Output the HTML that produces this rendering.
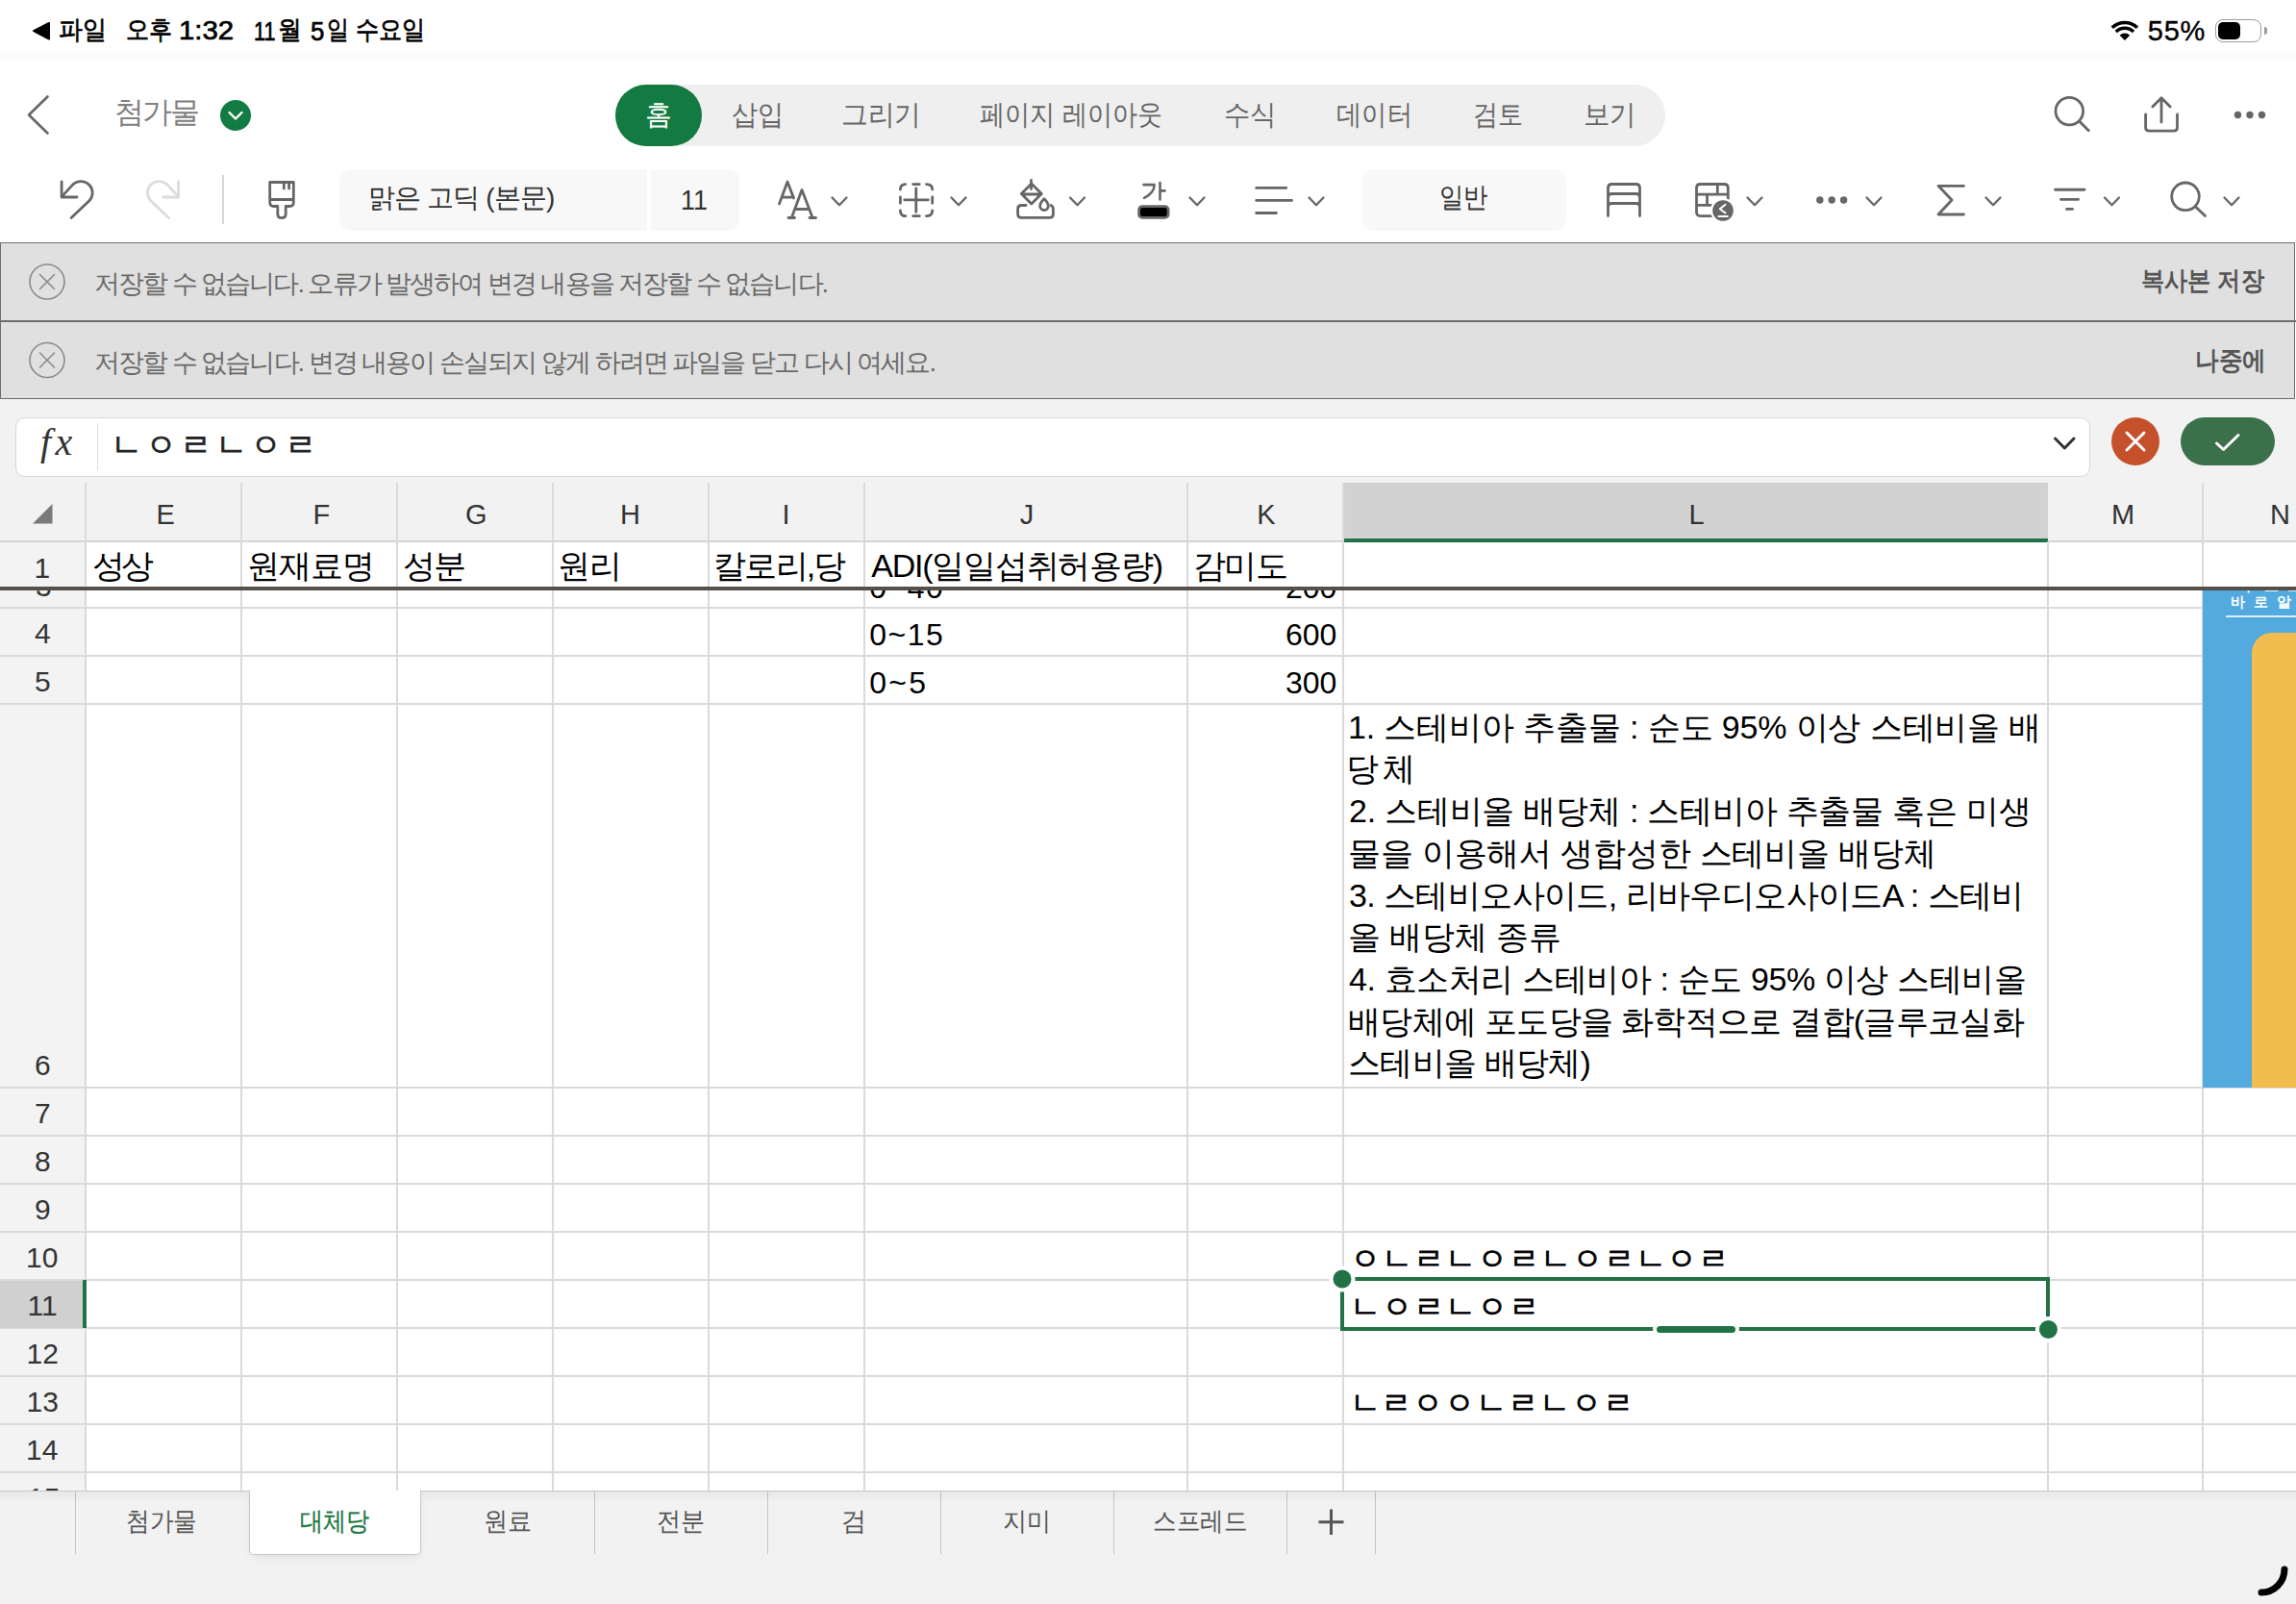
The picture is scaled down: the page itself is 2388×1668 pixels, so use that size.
<!DOCTYPE html>
<html><head><meta charset="utf-8">
<style>
html,body{margin:0;padding:0;}
body{width:2388px;height:1668px;position:relative;overflow:hidden;background:#fff;font-family:"Liberation Sans",sans-serif;color:#000;}
.a{position:absolute;}
.t{position:absolute;white-space:pre;line-height:1;}
svg.s{position:absolute;overflow:visible;pointer-events:none;}
.ic path,.ic circle,.ic rect{fill:none;stroke:#666;stroke-width:2.8;stroke-linecap:round;stroke-linejoin:round;}
</style></head><body>

<div class="a" style="left:0;top:53px;width:2388px;height:10px;background:#fcfcfc"></div>
<svg class="s" width="2388" height="1668" style="left:0;top:0"><path d="M35 32.2 L51 24 L51 40.5 Z" fill="#000" stroke="#000" stroke-width="2" stroke-linejoin="round"/></svg>
<div class="t" id="sb_pa" style="left:61.00px;top:18.19px;font-size:26.5px;color:#000;font-weight:normal;letter-spacing:0.000px;-webkit-text-stroke:0.7px #000;transform:scaleX(0.9244);transform-origin:0 0;">파일</div>
<div class="t" id="sb_oh" style="left:131.00px;top:18.19px;font-size:26.5px;color:#000;font-weight:normal;letter-spacing:0.000px;-webkit-text-stroke:0.7px #000;transform:scaleX(0.8906);transform-origin:0 0;">오후</div>
<div class="t" id="sb_t" style="left:185.60px;top:18.25px;font-size:27.5px;color:#000;font-weight:normal;letter-spacing:0.000px;-webkit-text-stroke:0.7px #000;transform:scaleX(1.0676);transform-origin:0 0;">1:32</div>
<div class="t" id="sb_11" style="left:264.20px;top:18.55px;font-size:27.5px;color:#000;font-weight:normal;letter-spacing:0.000px;-webkit-text-stroke:0.7px #000;transform:scaleX(0.7889);transform-origin:0 0;">11</div>
<div class="t" id="sb_wol" style="left:289.40px;top:18.19px;font-size:26.5px;color:#000;font-weight:normal;letter-spacing:0.000px;-webkit-text-stroke:0.7px #000;transform:scaleX(0.9172);transform-origin:0 0;">월</div>
<div class="t" id="sb_5" style="left:323.20px;top:18.55px;font-size:27.5px;color:#000;font-weight:normal;letter-spacing:0.000px;-webkit-text-stroke:0.7px #000;transform:scaleX(0.9388);transform-origin:0 0;">5</div>
<div class="t" id="sb_il" style="left:340.00px;top:18.19px;font-size:26.5px;color:#000;font-weight:normal;letter-spacing:0.000px;-webkit-text-stroke:0.7px #000;transform:scaleX(0.8490);transform-origin:0 0;">일</div>
<div class="t" id="sb_dow" style="left:370.00px;top:17.69px;font-size:26.5px;color:#000;font-weight:normal;letter-spacing:0.000px;-webkit-text-stroke:0.7px #000;transform:scaleX(0.8954);transform-origin:0 0;">수요일</div>
<svg class="s" width="2388" height="1668" style="left:0;top:0"><g fill="#000"><path d="M2209.9 42 L2204.6 36.8 A7.5 7.5 0 0 1 2215.2 36.8 Z"/><path d="M2200.8 33 A13 13 0 0 1 2219 33" fill="none" stroke="#000" stroke-width="3.6"/><path d="M2196.8 28.8 A18.8 18.8 0 0 1 2223 28.8" fill="none" stroke="#000" stroke-width="3.6"/></g></svg>
<div class="t" id="sb_pct" style="left:2233.80px;top:17.74px;font-size:29px;color:#000;font-weight:normal;letter-spacing:0.750px;-webkit-text-stroke:0.4px #000;">55%</div>
<div class="a" style="left:2303.5px;top:19.5px;width:46px;height:22px;border:1.6px solid #9a9a9a;border-radius:8px"></div>
<div class="a" style="left:2307px;top:23px;width:23px;height:18px;background:#000;border-radius:5px"></div>
<div class="a" style="left:2355px;top:28px;width:3px;height:8px;background:#999;border-radius:0 4px 4px 0"></div>
<svg class="s" width="2388" height="1668" style="left:0;top:0"><g class="ic"><path d="M49.5 100.5 L30 119.5 L49.5 138.5" style="stroke:#666;stroke-width:2.6"/></g></svg>
<div class="t" id="title" style="left:119.00px;top:101.26px;font-size:31px;color:#808080;font-weight:normal;letter-spacing:-2.000px;">첨가물</div>
<div class="a" style="left:229px;top:104px;width:32px;height:32px;border-radius:50%;background:#137c43"></div>
<svg class="s" width="2388" height="1668" style="left:0;top:0"><path d="M238.5 117 L245 123.5 L251.5 117" fill="none" stroke="#fff" stroke-width="2.4" stroke-linecap="round" stroke-linejoin="round"/></svg>
<div class="a" style="left:640px;top:88px;width:1092px;height:64px;background:#efefef;border-radius:32px"></div>
<div class="a" style="left:640px;top:88px;width:90px;height:64px;background:#137a41;border-radius:32px"></div>
<div class="t" id="tab0" style="left:671.00px;top:104.84px;font-size:29px;color:#fff;font-weight:normal;letter-spacing:0.000px;transform:scaleX(0.9600);transform-origin:0 0;">홈</div>
<div class="t" id="tab1" style="left:761.00px;top:104.84px;font-size:29px;color:#666;font-weight:normal;letter-spacing:0.000px;transform:scaleX(0.9366);transform-origin:0 0;">삽입</div>
<div class="t" id="tab2" style="left:875.00px;top:105.34px;font-size:29px;color:#666;font-weight:normal;letter-spacing:0.000px;transform:scaleX(0.9568);transform-origin:0 0;">그리기</div>
<div class="t" id="tab3" style="left:1019.00px;top:105.34px;font-size:29px;color:#666;font-weight:normal;letter-spacing:0.000px;transform:scaleX(0.9014);transform-origin:0 0;">페이지 레이아웃</div>
<div class="t" id="tab4" style="left:1273.00px;top:104.84px;font-size:29px;color:#666;font-weight:normal;letter-spacing:0.000px;transform:scaleX(0.9450);transform-origin:0 0;">수식</div>
<div class="t" id="tab5" style="left:1390.00px;top:105.34px;font-size:29px;color:#666;font-weight:normal;letter-spacing:0.000px;transform:scaleX(0.9085);transform-origin:0 0;">데이터</div>
<div class="t" id="tab6" style="left:1532.00px;top:104.84px;font-size:29px;color:#666;font-weight:normal;letter-spacing:0.000px;transform:scaleX(0.8988);transform-origin:0 0;">검토</div>
<div class="t" id="tab7" style="left:1647.00px;top:105.34px;font-size:29px;color:#666;font-weight:normal;letter-spacing:0.000px;transform:scaleX(0.9450);transform-origin:0 0;">보기</div>
<svg class="s" width="2388" height="1668" style="left:0;top:0"><g class="ic" style="stroke-width:2.8"><circle cx="2152.3" cy="115.6" r="14.3"/><path d="M2162.6 126 L2172.3 135.8"/><path d="M2248 102 V127 M2238.8 111 L2248 101.8 L2257.2 111 M2231.6 119 V132.5 Q2231.6 136.2 2235.3 136.2 H2260.8 Q2264.5 136.2 2264.5 132.5 V119"/></g></svg>
<svg class="s" width="2388" height="1668" style="left:0;top:0"><g fill="#666"><circle cx="2327.5" cy="119.5" r="3.7"/><circle cx="2340" cy="119.5" r="3.7"/><circle cx="2352.5" cy="119.5" r="3.7"/></g></svg>
<svg class="s" width="2388" height="1668" style="left:0;top:0"><g class="ic"><path d="M64.1 189 V205 H80"/><path d="M64.6 204.1 L75.6 192.1 A12 12 0 0 1 92.6 192.1 A12 12 0 0 1 92.6 209.1 L74.1 226.5"/><path style="stroke:#dcdcdc" d="M185.5 189 V205 H169.6"/><path style="stroke:#dcdcdc" d="M185 204.1 L174 192.1 A12 12 0 0 0 157 192.1 A12 12 0 0 0 157 209.1 L175.5 226.5"/><path d="M280.7 189.5 H305.3 V210.5 Q305.3 214.5 301.3 214.5 H297.2 V222.5 Q297.2 226.7 293 226.7 Q288.8 226.7 288.8 222.5 V214.5 H284.7 Q280.7 214.5 280.7 210.5 Z M280.7 207.5 H305.3 M295.3 190 V196 M300.6 190 V196"/></g></svg>
<div class="a" style="left:231px;top:182px;width:2px;height:51px;background:#d6d6d6"></div>
<div class="a" style="left:353px;top:176px;width:319.5px;height:63.5px;background:#f8f8f8;border-radius:12px 0 0 12px"></div>
<div class="a" style="left:677px;top:176px;width:92px;height:63.5px;background:#f8f8f8;border-radius:0 12px 12px 0"></div>
<div class="t" id="fontname" style="left:383.00px;top:192.38px;font-size:28px;color:#333;font-weight:normal;letter-spacing:-0.889px;">맑은 고딕 (본문)</div>
<div class="t" id="fontsize" style="left:708.00px;top:193.30px;font-size:30px;color:#333;font-weight:normal;letter-spacing:0.000px;transform:scaleX(0.8929);transform-origin:0 0;">11</div>
<div class="a" style="left:1417px;top:176px;width:212px;height:63.5px;background:#f8f8f8;border-radius:12px"></div>
<div class="t" id="numfmt" style="left:1497.00px;top:191.34px;font-size:29px;color:#333;font-weight:normal;letter-spacing:0.000px;transform:scaleX(0.8774);transform-origin:0 0;">일반</div>
<svg class="s" width="2388" height="1668" style="left:0;top:0"><g class="ic"><path d="M810.5 212 L819 189 L825.5 206 M814 205.2 H823"/><path d="M823.5 226 L834 197.5 L845 226 M828 217.5 H840.5 M820 226.5 H826.5 M842 226.5 H848.5"/><path d="M865.5 205.5 L873 213.2 L880.5 205.5" style="stroke-width:2.3"/><path d="M936.4 197 Q936.4 191.6 941.8 191.6 M963.5 191.6 Q969.7 191.6 969.7 197 M969.7 219 Q969.7 224.7 963.5 224.7 M941.8 224.7 Q936.4 224.7 936.4 219 M949.7 191.6 H956.3 M949.7 224.7 H956.3 M936.4 205 V211.3 M969.7 205 V211.3 M952.8 196 V220.4 M940.7 207.8 H965.4"/><path d="M989.5 205.5 L997 213.2 L1004.5 205.5" style="stroke-width:2.3"/><path d="M1072.8 191 L1083.3 201.5 L1072.8 212 L1062.3 201.5 Z M1062.8 202 H1082.5 M1072.5 187.5 V196.5"/><path d="M1067 213.5 H1062.5 Q1058.6 213.5 1058.6 217.5 V222.4 Q1058.6 226.3 1062.5 226.3 H1091.5 Q1095.4 226.3 1095.4 222.4 V217.5 Q1095.4 214.6 1093 213.5"/><path d="M1086 206.8 Q1090.3 211 1090.3 214.2 A4.3 4.3 0 0 1 1081.7 214.2 Q1081.7 211 1086 206.8 Z"/><path d="M1113.0 205.5 L1120.5 213.2 L1128.0 205.5" style="stroke-width:2.3"/><path d="M1189.5 192.1 H1200.5 Q1201 200 1190 205.9 M1206.5 190 V207.5 M1206.5 198.4 H1211.5" style="stroke-width:2.6"/><rect x="1184.6" y="214.7" width="30.5" height="11.7" rx="3.5" style="fill:#000;stroke:#666;stroke-width:2.8"/><path d="M1237.5 205.5 L1245 213.2 L1252.5 205.5" style="stroke-width:2.3"/><path d="M1306.7 195.4 H1337.6 M1306.7 208.4 H1343.5 M1306.7 221.5 H1327.4" style="stroke-width:2.9"/><path d="M1361.5 205.5 L1369 213.2 L1376.5 205.5" style="stroke-width:2.3"/><path d="M1672.5 224.5 V195.5 Q1672.5 191.5 1676.5 191.5 H1701.5 Q1705.5 191.5 1705.5 195.5 V224.5 M1672.5 205.5 Q1672.5 201.5 1676.5 201.5 H1701.5 Q1705.5 201.5 1705.5 205.5 M1672.5 215.5 Q1672.5 211.5 1676.5 211.5 H1701.5 Q1705.5 211.5 1705.5 215.5"/><path d="M1781 224.6 H1768.5 Q1764.5 224.6 1764.5 220.6 V195.5 Q1764.5 191.5 1768.5 191.5 H1793.3 Q1797.3 191.5 1797.3 195.5 V207 M1764.5 202.2 H1797.3 M1764.5 213.4 H1780 M1786.3 191.5 V202.2 M1775.5 202.2 V213.4"/><circle cx="1792" cy="219" r="13" style="fill:#fff;stroke:none"/><circle cx="1792" cy="219" r="10.8" style="fill:#666;stroke:none"/><path d="M1794.5 212.8 L1788.8 217.2 L1794.5 221.5 M1787.5 225 H1796.8" style="stroke:#fff;stroke-width:2"/><path d="M1817.5 205.5 L1825 213.2 L1832.5 205.5" style="stroke-width:2.3"/><path d="M1941.5 205.5 L1949 213.2 L1956.5 205.5" style="stroke-width:2.3"/><path d="M2042.5 193.3 H2016 L2030 208 L2016 223 H2042.5"/><path d="M2065.5 205.5 L2073 213.2 L2080.5 205.5" style="stroke-width:2.3"/><path d="M2137.5 197.2 H2168 M2143.5 207.4 H2161.5 M2149.5 217.4 H2155.5" style="stroke-width:2.9"/><path d="M2189.0 205.5 L2196.5 213.2 L2204.0 205.5" style="stroke-width:2.3"/><circle cx="2273" cy="204.3" r="14.3"/><path d="M2283.3 214.8 L2293.5 224.6"/><path d="M2313.5 205.5 L2321 213.2 L2328.5 205.5" style="stroke-width:2.3"/></g></svg>
<svg class="s" width="2388" height="1668" style="left:0;top:0"><g fill="#666"><circle cx="1892.8" cy="208" r="3.7"/><circle cx="1905.2" cy="208" r="3.7"/><circle cx="1917.6" cy="208" r="3.7"/></g></svg>
<div class="a" style="left:0;top:252px;width:2385px;height:161px;background:#e0e0e0;border:1.5px solid #6e6e6e"></div>
<div class="a" style="left:0;top:333px;width:2388px;height:2px;background:#6e6e6e"></div>
<svg class="s" width="2388" height="1668" style="left:0;top:0"><g fill="none" stroke="#8a8a8a" stroke-width="1.6"><circle cx="49" cy="293" r="18"/><path d="M41.5 285.5 L56.5 300.5 M56.5 285.5 L41.5 300.5" stroke-linecap="round"/></g></svg>
<svg class="s" width="2388" height="1668" style="left:0;top:0"><g fill="none" stroke="#8a8a8a" stroke-width="1.6"><circle cx="49" cy="374.5" r="18"/><path d="M41.5 367.0 L56.5 382.0 M56.5 367.0 L41.5 382.0" stroke-linecap="round"/></g></svg>
<div class="t" id="ban1" style="left:98.00px;top:282.42px;font-size:27px;color:#6a6a6a;font-weight:normal;letter-spacing:-1.959px;">저장할 수 없습니다. 오류가 발생하여 변경 내용을 저장할 수 없습니다.</div>
<div class="t" id="ban2" style="left:98.00px;top:363.92px;font-size:27px;color:#6a6a6a;font-weight:normal;letter-spacing:-1.944px;">저장할 수 없습니다. 변경 내용이 손실되지 않게 하려면 파일을 닫고 다시 여세요.</div>
<div class="t" id="ban1r" style="left:2227.00px;top:278.92px;font-size:27px;color:#555;font-weight:bold;letter-spacing:0.000px;transform:scaleX(0.8972);transform-origin:0 0;">복사본 저장</div>
<div class="t" id="ban2r" style="left:2283.00px;top:361.92px;font-size:27px;color:#555;font-weight:bold;letter-spacing:0.000px;transform:scaleX(0.9145);transform-origin:0 0;">나중에</div>
<div class="a" style="left:0;top:415px;width:2388px;height:87px;background:#f2f2f2"></div>
<div class="a" style="left:16px;top:434px;width:2155.5px;height:59.5px;background:#fff;border:1px solid #d6d6d6;border-radius:10px"></div>
<div class="t" id="fx" style="left:42.00px;top:440.40px;font-size:40px;color:#333;font-weight:normal;letter-spacing:4.500px;font-family:'Liberation Serif',serif;font-style:italic">fx</div>
<div class="a" style="left:100.5px;top:440px;width:1.5px;height:49px;background:#dedede"></div>
<div class="t" id="ftext" style="left:115.00px;top:445.68px;font-size:33px;color:#222;font-weight:normal;letter-spacing:3.200px;-webkit-text-stroke:0.9px #222;">ㄴㅇㄹㄴㅇㄹ</div>
<svg class="s" width="2388" height="1668" style="left:0;top:0"><path d="M2137.5 456 L2147.3 466 L2157 456" fill="none" stroke="#333" stroke-width="3" stroke-linecap="round" stroke-linejoin="round"/></svg>
<div class="a" style="left:2196px;top:434px;width:50px;height:50px;border-radius:50%;background:#c4512b"></div>
<svg class="s" width="2388" height="1668" style="left:0;top:0"><path d="M2212 450 L2230 468 M2230 450 L2212 468" fill="none" stroke="#fff" stroke-width="3" stroke-linecap="round"/></svg>
<div class="a" style="left:2268px;top:434px;width:98px;height:50px;border-radius:25px;background:#3a714b"></div>
<svg class="s" width="2388" height="1668" style="left:0;top:0"><path d="M2305.5 461 L2312.5 467.5 L2328 452.5" fill="none" stroke="#fff" stroke-width="3" stroke-linecap="round" stroke-linejoin="round"/></svg>
<div class="a" style="left:0;top:502px;width:2388px;height:61px;background:#f2f2f2"></div>
<div class="a" style="left:0;top:563px;width:89px;height:987px;background:#f3f3f3"></div>
<div class="a" style="left:1397px;top:502px;width:733px;height:61px;background:#d2d2d2"></div>
<div class="a" style="left:0;top:562px;width:2388px;height:2px;background:#d4d4d4"></div>
<div class="a" style="left:1397px;top:560px;width:733px;height:4px;background:#217346"></div>
<div class="a" style="left:0;top:631px;width:2291px;height:2px;background:#dadada"></div>
<div class="a" style="left:2291px;top:631px;width:97px;height:2px;background:#dadada"></div>
<div class="a" style="left:0;top:681px;width:2291px;height:2px;background:#dadada"></div>
<div class="a" style="left:2291px;top:681px;width:97px;height:2px;background:#dadada"></div>
<div class="a" style="left:0;top:731px;width:2291px;height:2px;background:#dadada"></div>
<div class="a" style="left:2291px;top:731px;width:97px;height:2px;background:#dadada"></div>
<div class="a" style="left:0;top:1130px;width:2291px;height:2px;background:#dadada"></div>
<div class="a" style="left:2291px;top:1130px;width:97px;height:2px;background:#dadada"></div>
<div class="a" style="left:0;top:1180px;width:2291px;height:2px;background:#dadada"></div>
<div class="a" style="left:2291px;top:1180px;width:97px;height:2px;background:#dadada"></div>
<div class="a" style="left:0;top:1230px;width:2291px;height:2px;background:#dadada"></div>
<div class="a" style="left:2291px;top:1230px;width:97px;height:2px;background:#dadada"></div>
<div class="a" style="left:0;top:1280px;width:2291px;height:2px;background:#dadada"></div>
<div class="a" style="left:2291px;top:1280px;width:97px;height:2px;background:#dadada"></div>
<div class="a" style="left:0;top:1330px;width:2291px;height:2px;background:#dadada"></div>
<div class="a" style="left:2291px;top:1330px;width:97px;height:2px;background:#dadada"></div>
<div class="a" style="left:0;top:1380px;width:2291px;height:2px;background:#dadada"></div>
<div class="a" style="left:2291px;top:1380px;width:97px;height:2px;background:#dadada"></div>
<div class="a" style="left:0;top:1430px;width:2291px;height:2px;background:#dadada"></div>
<div class="a" style="left:2291px;top:1430px;width:97px;height:2px;background:#dadada"></div>
<div class="a" style="left:0;top:1480px;width:2291px;height:2px;background:#dadada"></div>
<div class="a" style="left:2291px;top:1480px;width:97px;height:2px;background:#dadada"></div>
<div class="a" style="left:0;top:1530px;width:2291px;height:2px;background:#dadada"></div>
<div class="a" style="left:2291px;top:1530px;width:97px;height:2px;background:#dadada"></div>
<div class="a" style="left:88px;top:502px;width:2px;height:1048px;background:#dadada"></div>
<div class="a" style="left:250px;top:502px;width:2px;height:1048px;background:#dadada"></div>
<div class="a" style="left:412px;top:502px;width:2px;height:1048px;background:#dadada"></div>
<div class="a" style="left:574px;top:502px;width:2px;height:1048px;background:#dadada"></div>
<div class="a" style="left:736px;top:502px;width:2px;height:1048px;background:#dadada"></div>
<div class="a" style="left:898px;top:502px;width:2px;height:1048px;background:#dadada"></div>
<div class="a" style="left:1234px;top:502px;width:2px;height:1048px;background:#dadada"></div>
<div class="a" style="left:1396px;top:502px;width:2px;height:1048px;background:#dadada"></div>
<div class="a" style="left:2129px;top:563px;width:2px;height:987px;background:#dadada"></div>
<div class="a" style="left:2290px;top:502px;width:2px;height:1048px;background:#dadada"></div>
<svg class="s" width="2388" height="1668" style="left:0;top:0"><path d="M54.5 524 L54.5 544.5 L34 544.5 Z" fill="#7a7a7a"/></svg>
<div class="t" id="colE" style="left:162.50px;top:521.09px;font-size:29px;color:#333;font-weight:normal;letter-spacing:0.000px;">E</div>
<div class="t" id="colF" style="left:325.50px;top:521.09px;font-size:29px;color:#333;font-weight:normal;letter-spacing:0.000px;">F</div>
<div class="t" id="colG" style="left:484.00px;top:521.09px;font-size:29px;color:#333;font-weight:normal;letter-spacing:0.000px;">G</div>
<div class="t" id="colH" style="left:645.00px;top:521.09px;font-size:29px;color:#333;font-weight:normal;letter-spacing:0.000px;">H</div>
<div class="t" id="colI" style="left:813.50px;top:521.09px;font-size:29px;color:#333;font-weight:normal;letter-spacing:0.000px;">I</div>
<div class="t" id="colJ" style="left:1060.75px;top:521.09px;font-size:29px;color:#333;font-weight:normal;letter-spacing:0.000px;">J</div>
<div class="t" id="colK" style="left:1307.30px;top:521.09px;font-size:29px;color:#333;font-weight:normal;letter-spacing:0.000px;">K</div>
<div class="t" id="colL" style="left:1756.60px;top:521.09px;font-size:29px;color:#333;font-weight:normal;letter-spacing:0.000px;">L</div>
<div class="t" id="colM" style="left:2196.00px;top:521.09px;font-size:29px;color:#333;font-weight:normal;letter-spacing:0.000px;">M</div>
<div class="t" id="colN" style="left:2361.00px;top:521.09px;font-size:29px;color:#333;font-weight:normal;letter-spacing:0.000px;">N</div>
<div class="a" style="left:0;top:1332px;width:86px;height:49px;background:#d0d0d0"></div>
<div class="a" style="left:86px;top:1331px;width:3.5px;height:50px;background:#217346"></div>
<div class="t" id="rn1" style="left:35.50px;top:576.15px;font-size:30px;color:#333;font-weight:normal;letter-spacing:0.000px;">1</div>
<div class="t" id="rn4" style="left:36.00px;top:643.95px;font-size:30px;color:#333;font-weight:normal;letter-spacing:0.000px;">4</div>
<div class="t" id="rn5" style="left:36.00px;top:693.95px;font-size:30px;color:#333;font-weight:normal;letter-spacing:0.000px;">5</div>
<div class="t" id="rn6" style="left:36.00px;top:1092.95px;font-size:30px;color:#333;font-weight:normal;letter-spacing:0.000px;">6</div>
<div class="t" id="rn7" style="left:36.00px;top:1142.95px;font-size:30px;color:#333;font-weight:normal;letter-spacing:0.000px;">7</div>
<div class="t" id="rn8" style="left:36.00px;top:1192.95px;font-size:30px;color:#333;font-weight:normal;letter-spacing:0.000px;">8</div>
<div class="t" id="rn9" style="left:36.00px;top:1242.95px;font-size:30px;color:#333;font-weight:normal;letter-spacing:0.000px;">9</div>
<div class="t" id="rn10" style="left:27.00px;top:1292.95px;font-size:30px;color:#333;font-weight:normal;letter-spacing:0.000px;">10</div>
<div class="t" id="rn11" style="left:28.50px;top:1342.95px;font-size:30px;color:#333;font-weight:normal;letter-spacing:0.000px;">11</div>
<div class="t" id="rn12" style="left:27.50px;top:1392.95px;font-size:30px;color:#333;font-weight:normal;letter-spacing:0.000px;">12</div>
<div class="t" id="rn13" style="left:27.50px;top:1442.95px;font-size:30px;color:#333;font-weight:normal;letter-spacing:0.000px;">13</div>
<div class="t" id="rn14" style="left:27.00px;top:1492.95px;font-size:30px;color:#333;font-weight:normal;letter-spacing:0.000px;">14</div>
<div class="t" id="c_E1" style="left:95.50px;top:570.99px;font-size:34px;color:#000;font-weight:normal;letter-spacing:-4.000px;">성상</div>
<div class="t" id="c_F1" style="left:256.50px;top:570.99px;font-size:34px;color:#000;font-weight:normal;letter-spacing:-0.667px;">원재료명</div>
<div class="t" id="c_G1" style="left:418.75px;top:570.99px;font-size:34px;color:#000;font-weight:normal;letter-spacing:-1.500px;">성분</div>
<div class="t" id="c_H1" style="left:580.00px;top:570.99px;font-size:34px;color:#000;font-weight:normal;letter-spacing:-1.000px;">원리</div>
<div class="t" id="c_I1" style="left:742.00px;top:570.99px;font-size:34px;color:#000;font-weight:normal;letter-spacing:-1.750px;">칼로리,당</div>
<div class="t" id="c_J1" style="left:906.25px;top:570.99px;font-size:34px;color:#000;font-weight:normal;letter-spacing:-1.223px;">ADI(일일섭취허용량)</div>
<div class="t" id="c_K1" style="left:1240.50px;top:570.99px;font-size:34px;color:#000;font-weight:normal;letter-spacing:-1.500px;">감미도</div>
<div class="t" id="c_J4" style="left:904.25px;top:643.85px;font-size:32px;color:#000;font-weight:normal;letter-spacing:1.496px;">0~15</div>
<div class="t" id="c_K4" style="left:1337.00px;top:643.85px;font-size:32px;color:#000;font-weight:normal;letter-spacing:0.000px;">600</div>
<div class="t" id="c_J5" style="left:904.25px;top:693.85px;font-size:32px;color:#000;font-weight:normal;letter-spacing:2.250px;">0~5</div>
<div class="t" id="c_K5" style="left:1337.00px;top:693.85px;font-size:32px;color:#000;font-weight:normal;letter-spacing:0.000px;">300</div>
<div class="a" style="left:0;top:614px;width:2291px;height:18px;overflow:hidden">
<div class="t" style="left:904.25px;top:-18.85px;font-size:32px;letter-spacing:1.496px">0~40</div>
<div class="t" style="left:1337.00px;top:-18.85px;font-size:32px;letter-spacing:0.000px">200</div>
<div class="t" style="left:37px;top:-19.5px;font-size:30px;color:#333">3</div>
</div>
<div class="t" id="L6_0" style="left:1402.00px;top:738.58px;font-size:34px;color:#000;font-weight:normal;letter-spacing:-0.138px;">1. 스테비아 추출물 : 순도 95% 이상 스테비올 배</div>
<div class="t" id="L6_1" style="left:1400.00px;top:782.31px;font-size:34px;color:#000;font-weight:normal;letter-spacing:3.600px;">당체</div>
<div class="t" id="L6_2" style="left:1403.00px;top:826.04px;font-size:34px;color:#000;font-weight:normal;letter-spacing:-0.233px;">2. 스테비올 배당체 : 스테비아 추출물 혹은 미생</div>
<div class="t" id="L6_3" style="left:1402.00px;top:869.77px;font-size:34px;color:#000;font-weight:normal;letter-spacing:-0.210px;">물을 이용해서 생합성한 스테비올 배당체</div>
<div class="t" id="L6_4" style="left:1403.00px;top:913.50px;font-size:34px;color:#000;font-weight:normal;letter-spacing:-0.597px;">3. 스테비오사이드, 리바우디오사이드A : 스테비</div>
<div class="t" id="L6_5" style="left:1402.00px;top:957.23px;font-size:34px;color:#000;font-weight:normal;letter-spacing:-0.143px;">올 배당체 종류</div>
<div class="t" id="L6_6" style="left:1403.00px;top:1000.96px;font-size:34px;color:#000;font-weight:normal;letter-spacing:-0.393px;">4. 효소처리 스테비아 : 순도 95% 이상 스테비올</div>
<div class="t" id="L6_7" style="left:1402.00px;top:1044.69px;font-size:34px;color:#000;font-weight:normal;letter-spacing:-0.696px;">배당체에 포도당을 화학적으로 결합(글루코실화</div>
<div class="t" id="L6_8" style="left:1402.00px;top:1088.42px;font-size:34px;color:#000;font-weight:normal;letter-spacing:-0.750px;">스테비올 배당체)</div>
<div class="t" id="c_L10" style="left:1404.00px;top:1294.24px;font-size:31.5px;color:#000;font-weight:normal;letter-spacing:0.950px;-webkit-text-stroke:0.9px #000;">ㅇㄴㄹㄴㅇㄹㄴㅇㄹㄴㅇㄹ</div>
<div class="t" id="c_L11" style="left:1403.50px;top:1343.87px;font-size:31.5px;color:#000;font-weight:normal;letter-spacing:1.000px;-webkit-text-stroke:0.9px #000;">ㄴㅇㄹㄴㅇㄹ</div>
<div class="t" id="c_L13" style="left:1403.50px;top:1444.24px;font-size:31.5px;color:#000;font-weight:normal;letter-spacing:0.933px;-webkit-text-stroke:0.9px #000;">ㄴㄹㅇㅇㄴㄹㄴㅇㄹ</div>
<div class="a" style="left:0;top:1531px;width:89px;height:19px;overflow:hidden"><div class="t" style="left:29px;top:12px;font-size:30px;color:#333">15</div></div>
<div class="a" style="left:0;top:610px;width:2388px;height:4px;background:#57504a"></div>
<div class="a" style="left:2291px;top:614px;width:97px;height:517px;background:#53aadf;overflow:hidden"><div class="a" style="left:50.5px;top:44px;width:80px;height:500px;background:#f2bd4f;border-radius:21px 0 0 0"></div><div class="a" style="left:24px;top:26.4px;width:80px;height:1.6px;background:#dceefa"></div><div class="t" style="left:29px;top:4px;font-size:15px;font-weight:bold;color:#fff;letter-spacing:9px">바로알</div><div class="t" style="left:40px;top:-13px;font-size:15px;font-weight:bold;color:#fff;letter-spacing:9px">무료로</div></div>
<div class="a" style="left:1394px;top:1328px;width:738px;height:56px;box-sizing:border-box;border:4px solid #217346"></div>
<div class="a" style="left:1719px;top:1376px;width:90px;height:12px;background:#fff;border-radius:6px"></div>
<div class="a" style="left:1723px;top:1378.8px;width:82px;height:6.8px;background:#217346;border-radius:4px"></div>
<svg class="s" width="2388" height="1668" style="left:0;top:0"><circle cx="1396" cy="1330" r="11.5" fill="#217346" stroke="#fff" stroke-width="4"/><circle cx="2130.4" cy="1382.5" r="11.5" fill="#217346" stroke="#fff" stroke-width="4"/></svg>
<div class="a" style="left:0;top:1550px;width:2388px;height:118px;background:#f2f2f2;border-top:1px solid #c8c8c8;box-sizing:border-box"></div>
<div class="a" style="left:77.5px;top:1551px;width:1px;height:65px;background:#c4c4c4"></div>
<div class="a" style="left:617.5px;top:1551px;width:1px;height:65px;background:#c4c4c4"></div>
<div class="a" style="left:797.5px;top:1551px;width:1px;height:65px;background:#c4c4c4"></div>
<div class="a" style="left:977.5px;top:1551px;width:1px;height:65px;background:#c4c4c4"></div>
<div class="a" style="left:1157.5px;top:1551px;width:1px;height:65px;background:#c4c4c4"></div>
<div class="a" style="left:1337.5px;top:1551px;width:1px;height:65px;background:#c4c4c4"></div>
<div class="a" style="left:1429.5px;top:1551px;width:1px;height:65px;background:#c4c4c4"></div>
<div class="a" style="left:0;top:1551px;width:2388px;height:12px;background:linear-gradient(rgba(0,0,0,0.045),rgba(0,0,0,0))"></div>
<div class="a" style="left:258.5px;top:1550px;width:179px;height:66.5px;background:#fff;box-sizing:border-box;border:1px solid #c6c6c6;border-top:none;border-radius:0 0 5px 5px;box-shadow:0 4px 10px -2px rgba(0,0,0,0.08)"></div>
<div class="t" id="sh0" style="left:130.50px;top:1568.67px;font-size:27px;color:#555;font-weight:normal;letter-spacing:0.000px;transform:scaleX(0.9156);transform-origin:0 0;">첨가물</div>
<div class="t" id="sh1" style="left:311.50px;top:1568.67px;font-size:27px;color:#1f7a45;font-weight:normal;letter-spacing:0.000px;-webkit-text-stroke:0.3px #1f7a45;transform:scaleX(0.8938);transform-origin:0 0;">대체당</div>
<div class="t" id="sh2" style="left:502.50px;top:1568.67px;font-size:27px;color:#555;font-weight:normal;letter-spacing:0.000px;transform:scaleX(0.9307);transform-origin:0 0;">원료</div>
<div class="t" id="sh3" style="left:682.50px;top:1568.67px;font-size:27px;color:#555;font-weight:normal;letter-spacing:0.000px;transform:scaleX(0.9307);transform-origin:0 0;">전분</div>
<div class="t" id="sh4" style="left:875.00px;top:1568.67px;font-size:27px;color:#555;font-weight:normal;letter-spacing:0.000px;transform:scaleX(0.9673);transform-origin:0 0;">검</div>
<div class="t" id="sh5" style="left:1043.00px;top:1568.67px;font-size:27px;color:#555;font-weight:normal;letter-spacing:0.000px;transform:scaleX(0.9278);transform-origin:0 0;">지미</div>
<div class="t" id="sh6" style="left:1199.00px;top:1568.67px;font-size:27px;color:#555;font-weight:normal;letter-spacing:0.000px;transform:scaleX(0.9087);transform-origin:0 0;">스프레드</div>
<svg class="s" width="2388" height="1668" style="left:0;top:0"><path d="M1384.5 1569.5 V1596 M1371.5 1582.7 H1397.5" stroke="#555" stroke-width="3" fill="none"/></svg>
<svg class="s" width="2388" height="1668" style="left:0;top:0"><path d="M2376 1632 A24 24 0 0 1 2352 1656" stroke="#000" stroke-width="7" fill="none" stroke-linecap="round"/></svg>
</body></html>
